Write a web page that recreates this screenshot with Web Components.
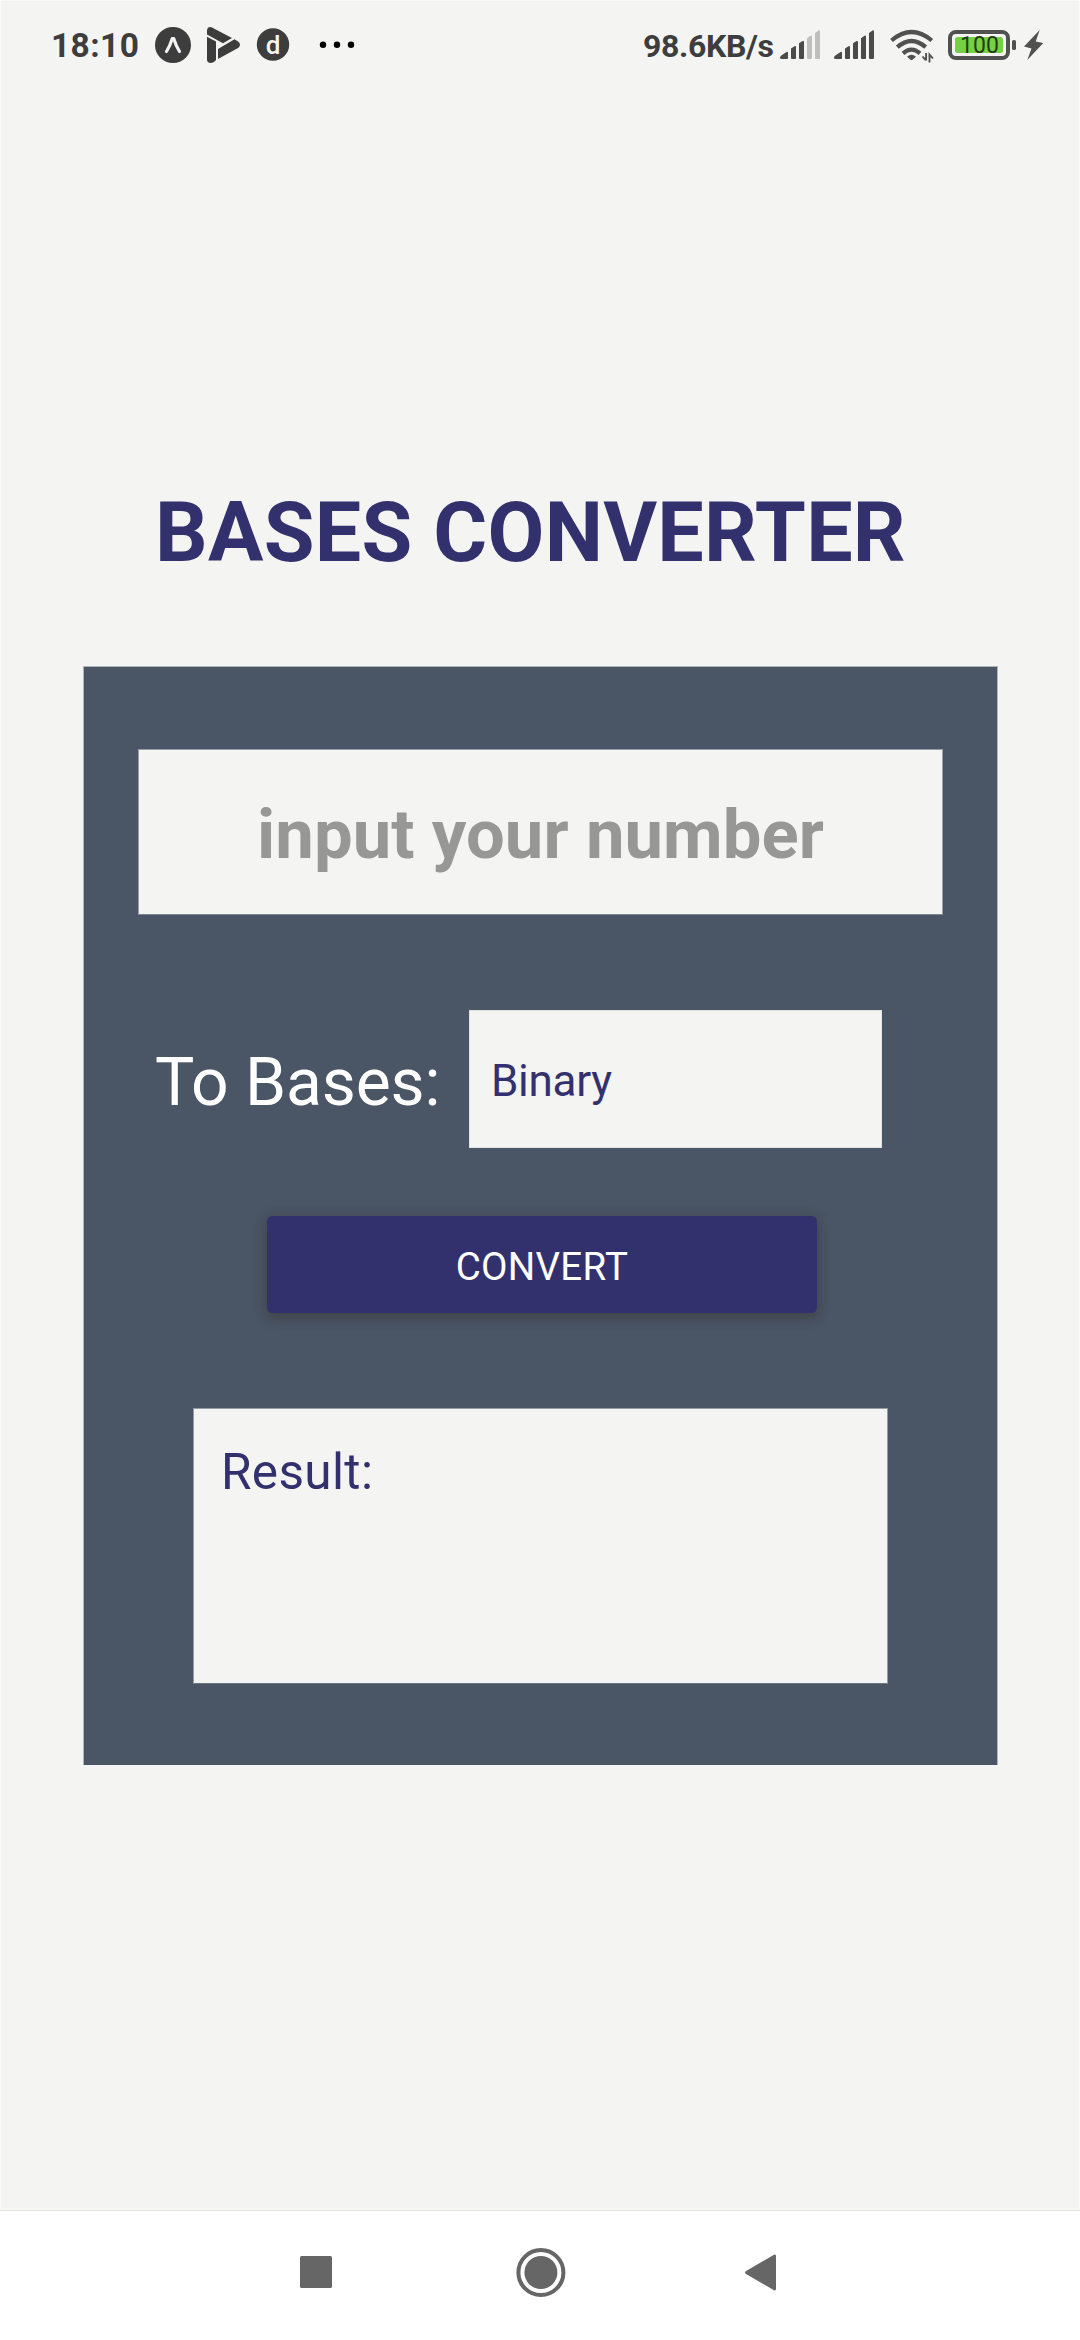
<!DOCTYPE html>
<html lang="en">
<head>
<meta charset="utf-8">
<title>Bases Converter</title>
<style>
html,body{margin:0;padding:0}
body{width:1080px;height:2340px;overflow:hidden;background:#f4f4f2;font-family:Roboto,"Liberation Sans",sans-serif}
</style>
</head>
<body>
<converter-screen></converter-screen>
<script>
const define = (name, css, html) => customElements.define(name, class extends HTMLElement {
  constructor() {
    super();
    this.attachShadow({mode: 'open'}).innerHTML = `<style>*{box-sizing:border-box}${css}</style>${html}`;
  }
});

define('signal-bars', `:host{display:block;width:40px;height:40px;color:#4b4b4b}svg{display:block}.weak{fill:var(--weak,#4b4b4b)}`,
`<svg width="40" height="40" viewBox="0 25 40 40" fill="currentColor">
<path d="M0 57.5Q0 56 2 55L6.5 52Q8 51.3 8 53V58Q8 59 7 59H1.5Q0 59 0 57.5Z"/>
<path d="M11 48.5L14.5 46.2Q16 45.5 16 47V58Q16 59 15 59H12Q11 59 11 58Z"/>
<path d="M19 43.3L22.5 41.1Q24 40.4 24 42V58Q24 59 23 59H20Q19 59 19 58Z"/>
<path class="weak" d="M27 38.2L30.5 35.8Q32 35 32 36.8V58Q32 59 31 59H28Q27 59 27 58Z"/>
<path class="weak" d="M35 33L38.5 30.5Q40 29.8 40 31.5V58Q40 59 39 59H36Q35 59 35 58Z"/></svg>`);

define('battery-meter', `:host{display:grid;width:68px;height:40px;margin-left:16px}svg,span{grid-area:1/1;display:block}span{width:62px;text-align:center;font-size:23px;line-height:40px;color:#1f3d12;padding-top:1px;padding-left:1px}`,
`<svg width="68" height="40" viewBox="948 25 68 40"><rect x="950" y="32" width="58" height="26" rx="6" fill="none" stroke="#515151" stroke-width="4"/><rect x="955" y="37" width="48" height="16" rx="2.5" fill="#75d043"/><rect x="1012" y="40" width="4" height="10" rx="1.6" fill="#515151"/></svg><span><slot></slot></span>`);

define('status-bar', `:host{display:flex;height:90px;padding:25px 0 0 51px;color:#3d3d3d}
svg{display:block;flex:none}.time{width:104px;font-weight:700;font-size:33.5px;line-height:40px;letter-spacing:.4px;padding-top:1px}
.speed{width:137px;font-weight:700;font-size:32px;line-height:40px;letter-spacing:-.35px;padding-top:1px;white-space:nowrap}
.left{display:flex;width:592px}.d{display:grid}.d>*{grid-area:1/1}.d span{width:36px;text-align:center;color:#f4f4f2;font-weight:500;font-size:26px;line-height:40px}
signal-bars+signal-bars{margin-left:14px}`,
`<div class="left"><span class="time">18:10</span>
<svg width="36" height="40" viewBox="155 25 36 40"><circle cx="173" cy="45" r="18" fill="currentColor"/><path d="M166.5 51.5Q170 46 172.3 38.5H173.7Q176 46 179.5 51.5" fill="none" stroke="#f4f4f2" stroke-width="3.2" stroke-linecap="round" stroke-linejoin="round"/></svg>
<svg width="34" height="40" viewBox="207 25 34 40" style="margin-left:16px" fill="currentColor"><path d="M207 30.2Q207.5 26.5 211.5 27.2L232 38L223 43.2L207 34.5Z"/><path d="M207 36.8L216 41.5V60Q214 63 210 63Q207 62.5 207 59.5Z"/><path d="M218 49L234.5 39.2L238.5 41.8Q241.5 44.7 238.5 47.7L218 59Z"/></svg>
<div class="d" style="margin-left:14px"><svg width="36" height="40" viewBox="255 25 36 40"><circle cx="273" cy="44.5" r="16.2" fill="currentColor"/></svg><span>d</span></div>
<svg width="36" height="40" viewBox="319 25 36 40" style="margin-left:28px" fill="#000"><circle cx="323" cy="44.8" r="3.2"/><circle cx="337" cy="44.8" r="3.2"/><circle cx="351" cy="44.8" r="3.2"/></svg></div>
<span class="speed">98.6KB/s</span>
<signal-bars style="--weak:#bfbfbe"></signal-bars><signal-bars></signal-bars>
<svg width="44" height="40" viewBox="889.5 25 44 40" style="margin-left:15.5px" fill="none" stroke="#515151" stroke-width="4.2"><path d="M891 40.5Q911 23.5 931.3 40.5M896.8 47.2Q911 34.8 925.2 47.2M902.5 53.3Q911 46 919.5 53.3"/><path d="M906.5 56.7Q911 53 915.5 56.7L912 59.8Q911 60.5 910 59.8Z" fill="#515151" stroke="none"/><path d="M925.6 53V60.5M922 56.5L925.2 60.2M929 62.5V54.5L932.4 58.5" stroke-width="1.9"/></svg>
<battery-meter style="margin-left:14.5px">100</battery-meter>
<svg width="20" height="40" viewBox="1024 25 20 40" style="margin-left:8px" fill="#515151"><path d="M1039.7 30L1024 46.5L1031.5 48.5L1027.3 60L1043.3 43L1035.7 41.5Z"/></svg>`);

define('app-title', `:host{display:block;height:576px;padding:395px 0 0 155px}h1{margin:0;font-size:82.5px;line-height:96px;font-weight:700;letter-spacing:.28px;color:#33316d;white-space:nowrap}`, `<h1><slot></slot></h1>`);

define('number-field', `:host{display:flex;width:805px;height:166px;margin:82px 0 0 54px;background:#f4f4f2;border:1px solid #9a9fa9;border-bottom-color:#7c8492;align-items:center;justify-content:center;padding-top:5px;color:#979796;font-weight:700;font-size:68.75px;line-height:80px;letter-spacing:.09px;white-space:nowrap}`, `<slot></slot>`);

define('base-picker', `:host{display:flex;height:138px;margin:95px 0 0 71px;align-items:center}label{width:314px;font-size:66px;line-height:78px;letter-spacing:-.1px;padding-top:7px;color:#fff;white-space:nowrap}
div{width:413px;height:138px;background:#f4f4f2;border:1px solid #e0e2e4;padding:4px 0 0 21px;display:flex;align-items:center;color:#33316d;font-size:44px;letter-spacing:-.3px}`, `<label><slot name="label"></slot></label><div><slot></slot></div>`);

define('convert-button', `:host{display:block;margin:68px 0 0 183px}button{display:block;width:550px;height:97px;border:0;border-radius:5.5px;background:#33316d;color:#fff;font:38.5px/44px Roboto,sans-serif;letter-spacing:.25px;padding:4px 0 0;box-shadow:0 5px 11px rgba(60,60,60,.55),0 1px 12px rgba(60,60,60,.3)}`, `<button><slot></slot></button>`);

define('result-box', `:host{display:block;width:695px;height:276px;margin:95px 0 0 109px;padding:33px 0 0 27px;background:#f4f4f2;border:1px solid #939ba3;border-bottom-color:#6b7581;color:#33316d;font-size:49.5px;line-height:60px;letter-spacing:.35px}`, `<slot></slot>`);

define('converter-card', `:host{box-sizing:border-box;display:flex;flex-direction:column;align-items:flex-start;width:915px;height:1099px;margin-left:83px;background:#4a5565;border:1px solid #aeb5ba;border-bottom:0}`, `<slot></slot>`);

define('nav-bar', `:host{box-sizing:border-box;display:flex;height:130px;margin-top:auto;background:#fff;border-top:1px solid #e2e2de;box-shadow:0 -1px #fafaf9;padding:40px 0 0 299px}svg{display:block;fill:#666;overflow:visible}`,
`<svg width="34" height="44" viewBox="299 2251 34 44"><rect x="300" y="2256" width="32" height="32" rx="1.5"/></svg>
<svg width="50" height="50" viewBox="515.5 2251 50 50" style="margin-left:182.5px"><circle cx="540.4" cy="2272.5" r="22.5" fill="none" stroke="#666" stroke-width="4"/><circle cx="540.4" cy="2272.5" r="16.5"/></svg>
<svg width="34" height="44" viewBox="744 2251 34 44" style="margin-left:178.5px"><path d="M745.7 2271.2L774 2254.8Q776 2254 776 2256.3V2288.7Q776 2291 774 2290.2L745.7 2273.8Q744.5 2272.5 745.7 2271.2Z"/></svg>`);

define('converter-screen', `:host{display:flex;flex-direction:column;width:1080px;height:2340px;box-shadow:inset 0 0 0 1px #fbfbfa}status-bar,app-title,number-field,result-box{box-sizing:border-box}`,
`<status-bar></status-bar><app-title>BASES CONVERTER</app-title>
<converter-card><number-field>input your number</number-field>
<base-picker><span slot="label">To Bases:</span>Binary</base-picker>
<convert-button>CONVERT</convert-button>
<result-box>Result:</result-box></converter-card>
<nav-bar></nav-bar>`);
</script>
</body>
</html>
